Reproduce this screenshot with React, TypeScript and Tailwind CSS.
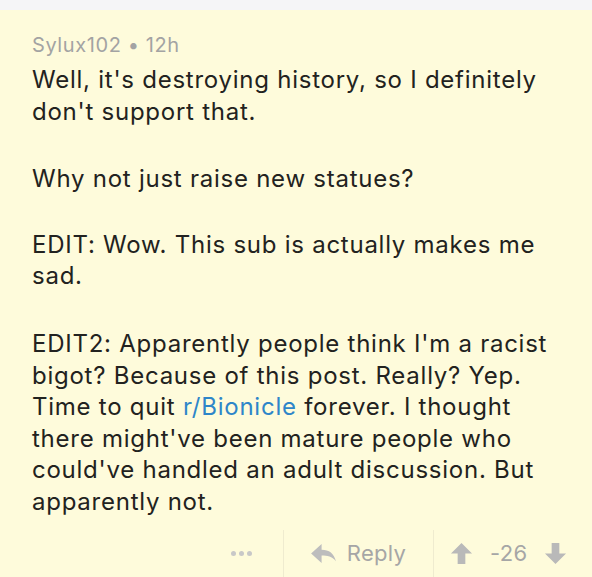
import React from "react"

const ArrowUp = () => (
  <svg viewBox="0 0 24 24" className="w-[23px] h-[23px]" fill="#b9b9b9">
    <path d="M12 1 L23 12 L16 12 L16 23 L8 23 L8 12 L1 12 Z" />
  </svg>
)

const ArrowDown = () => (
  <svg viewBox="0 0 24 24" className="w-[23px] h-[23px]" fill="#b9b9b9">
    <path d="M12 23 L23 12 L16 12 L16 1 L8 1 L8 12 L1 12 Z" />
  </svg>
)

const ReplyIcon = () => (
  <svg viewBox="0 0 26 22" className="w-[25px] h-[21px]" fill="#bdbdbd">
    <path d="M0 11 L11 1 L11 7 C19 7 24 11 26 19 C22 14 17 13 11 13 L11 21 Z" />
  </svg>
)

const App = () => {
  return (
    <div
      className="w-[592px] h-[577px] bg-[#fefbdb] overflow-hidden"
      style={{ fontFamily: "Inter, 'Noto Sans', sans-serif" }}
    >
      <div className="h-[10px] bg-[#f5f5f7]" />
      <div className="pl-[32px] pr-[26px] pt-[23px]">
        <div className="text-[20px] leading-[24px] tracking-[0.6px] text-[#a3a3a3]">
          Sylux102 • 12h
        </div>
        <div className="text-[24px] leading-[31.6px] tracking-[0.75px] text-[#222220] mt-[7px]">
          <p>Well, it's destroying history, so I definitely don't support that.</p>
          <p className="mt-[36px]">Why not just raise new statues?</p>
          <p className="mt-[34px]">EDIT: Wow. This sub is actually makes me sad.</p>
          <p className="mt-[36px]">
            EDIT2: Apparently people think I'm a racist bigot? Because of this post. Really? Yep.
            Time to quit <span className="text-[#2e86c9]">r/Bionicle</span> forever. I thought
            there might've been mature people who could've handled an adult discussion. But
            apparently not.
          </p>
        </div>
      </div>
      <div className="flex items-stretch h-[48px] mt-[12px] pl-[200px]">
        <div className="w-[83px] flex items-center justify-center">
          <div className="flex gap-[3px]">
            <span className="w-[5px] h-[5px] rounded-full bg-[#c8c8c8]" />
            <span className="w-[5px] h-[5px] rounded-full bg-[#c8c8c8]" />
            <span className="w-[5px] h-[5px] rounded-full bg-[#c8c8c8]" />
          </div>
        </div>
        <div className="w-px bg-[#efebcf]" />
        <div className="w-[149px] flex items-center justify-center gap-[11px] text-[22px] tracking-[0.3px] text-[#a6a6a6]">
          <ReplyIcon />
          <span>Reply</span>
        </div>
        <div className="w-px bg-[#efebcf]" />
        <div className="flex items-center gap-[17px] pl-[16px] text-[22px] tracking-[0.3px] text-[#a6a6a6]">
          <ArrowUp />
          <span>-26</span>
          <ArrowDown />
        </div>
      </div>
    </div>
  )
}

export default App
